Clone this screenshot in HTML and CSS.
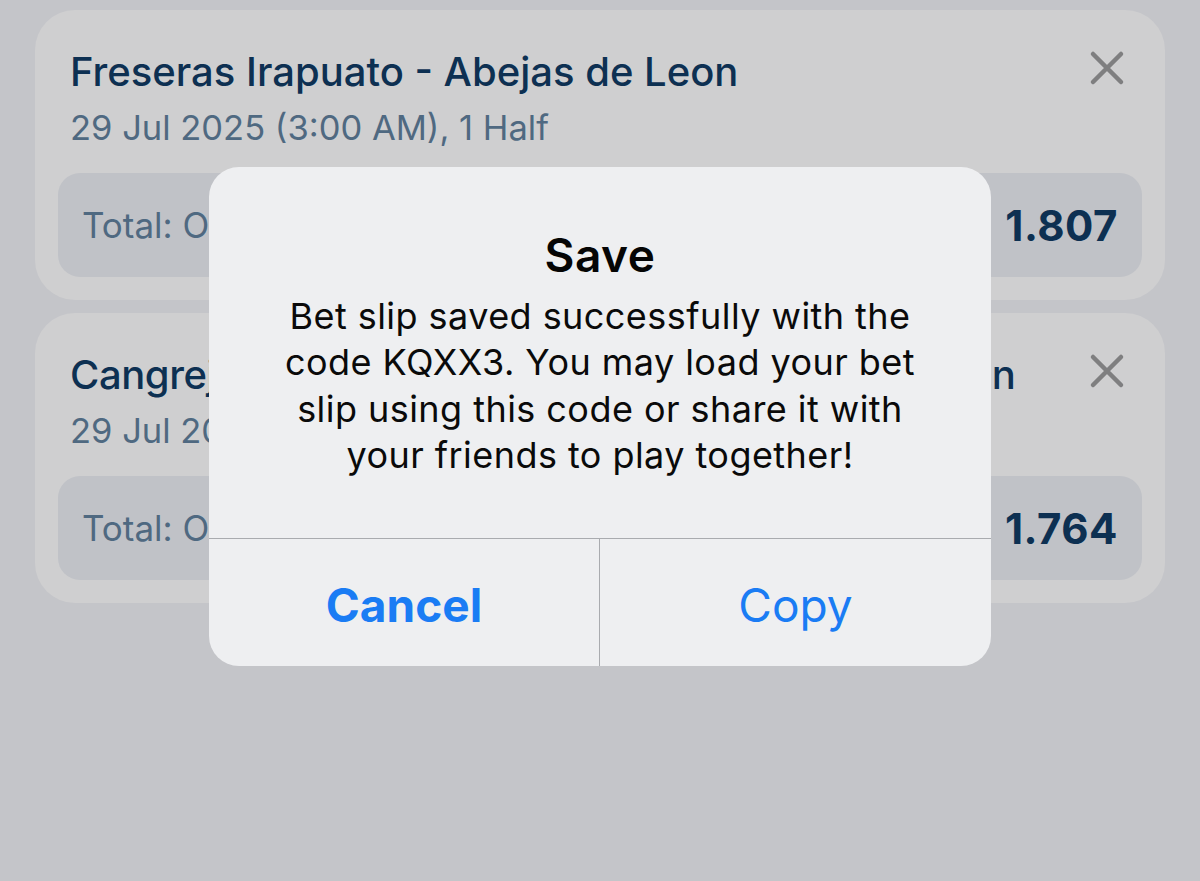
FILE: index.html
```html
<!DOCTYPE html>
<html lang="en">
<head>
<meta charset="utf-8">
<title>Save</title>
<link rel="stylesheet" href="styles.css">
</head>
<body>
<div class="screen">
  <div class="list">
    <div class="card">
      <div class="card-head">
        <div class="card-text">
          <div class="match">Freseras Irapuato - Abejas de Leon</div>
          <div class="date">29 Jul 2025 (3:00 AM), 1 Half</div>
        </div>
        <svg class="close" viewBox="0 0 36 36" aria-hidden="true"><path d="M4 4 L32 32 M32 4 L4 32" /></svg>
      </div>
      <div class="pick">
        <span class="market">Total: Over 2.5</span>
        <span class="odds">1.807</span>
      </div>
    </div>
    <div class="card">
      <div class="card-head">
        <div class="card-text">
          <div class="match match-long">Cangrejeros de Cancun - Venados FC de Mazatlan</div>
          <div class="date">29 Jul 2025 (4:00 AM), 1 Half</div>
        </div>
        <svg class="close" viewBox="0 0 36 36" aria-hidden="true"><path d="M4 4 L32 32 M32 4 L4 32" /></svg>
      </div>
      <div class="pick">
        <span class="market">Total: Over 2.5</span>
        <span class="odds">1.764</span>
      </div>
    </div>
  </div>

  <div class="alert" role="alertdialog">
    <div class="alert-body">
      <div class="alert-title">Save</div>
      <div class="alert-msg">Bet slip saved successfully with the<br>code KQXX3. You may load your bet<br>slip using this code or share it with<br>your friends to play together!</div>
    </div>
    <div class="alert-actions">
      <button class="btn btn-cancel">Cancel</button>
      <button class="btn btn-copy">Copy</button>
    </div>
  </div>
</div>
</body>
</html>
```

FILE: styles.css
```css
* { box-sizing: border-box; }
html, body {
  margin: 0;
  padding: 0;
  width: 1200px;
  height: 881px;
  overflow: hidden;
  background: #c4c5c9;
  font-family: Inter, "Noto Sans", "Liberation Sans", sans-serif;
}
.screen {
  position: relative;
  width: 1200px;
  height: 881px;
}
.list {
  display: flex;
  flex-direction: column;
  gap: 13px;
  padding: 10px 35px 0 35px;
}
.card {
  background: #cfcfd0;
  border-radius: 40px;
  padding: 40px 23px 23px 23px;
  height: 290px;
}
.card-head {
  display: flex;
  justify-content: space-between;
  align-items: flex-start;
  padding-left: 12px;
}
.card-text { display: flex; flex-direction: column; }
.match {
  font-size: 40px;
  line-height: 44px;
  font-weight: 500;
  color: #0d3052;
  letter-spacing: 0;
  white-space: nowrap;
}
.match-long { letter-spacing: -0.42px; }
.date {
  margin-top: 14px;
  font-size: 34.5px;
  line-height: 40px;
  color: #4f6981;
  letter-spacing: 0;
  white-space: nowrap;
}
.close {
  width: 36px;
  height: 36px;
  margin-top: 0;
  margin-right: 17px;
  stroke: #7f7f80;
  stroke-width: 4.5;
  stroke-linecap: round;
  fill: none;
  flex: none;
}
.pick {
  margin-top: 25px;
  height: 104px;
  background: #c0c2c7;
  border-radius: 22px;
  display: flex;
  align-items: center;
  justify-content: space-between;
  padding: 0 24px;
}
.market {
  font-size: 35px;
  color: #4f6981;
  white-space: nowrap;
}
.odds {
  font-size: 42px;
  font-weight: 700;
  letter-spacing: 0.5px;
  color: #0d3052;
}

.alert {
  position: absolute;
  left: 209px;
  top: 167px;
  width: 782px;
  height: 499px;
  background: #eeeff1;
  border-radius: 30px;
  display: flex;
  flex-direction: column;
  overflow: hidden;
}
.alert-body {
  flex: 1;
  padding: 64px 20px 0 20px;
  text-align: center;
}
.alert-title {
  font-size: 46px;
  line-height: 48px;
  font-weight: 600;
  letter-spacing: 0.5px;
  color: #050505;
}
.alert-msg {
  margin-top: 14px;
  font-size: 36px;
  line-height: 46.3px;
  letter-spacing: 0.45px;
  color: #0a0a0a;
  white-space: nowrap;
}
.alert-actions {
  display: grid;
  grid-template-columns: 1fr 1fr;
  height: 128px;
  border-top: 1px solid #a9abaf;
}
.btn {
  border: 0;
  background: transparent;
  font-family: inherit;
  font-size: 46px;
  color: #1a7cf4;
  padding: 0;
  padding-top: 4px;
}
.btn-cancel {
  font-weight: 700;
  border-right: 1px solid #a9abaf;
}
.btn-copy { font-weight: 400; }
```
